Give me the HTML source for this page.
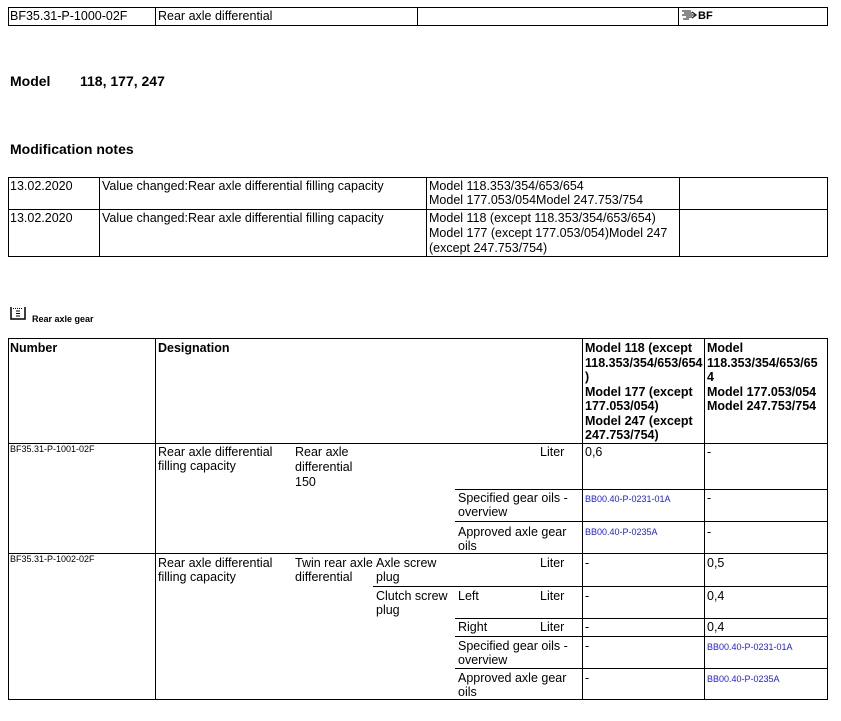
<!DOCTYPE html>
<html><head><meta charset="utf-8">
<style>
*{margin:0;padding:0;box-sizing:border-box}
body{width:841px;height:721px;background:#fff;position:relative;overflow:hidden;font-family:"Liberation Sans",Arial,sans-serif;font-size:12.5px;color:#000}
.l{position:absolute;background:#000}
.t{position:absolute;line-height:14px;white-space:nowrap}
.s{font-size:9px;line-height:11px}
.a{color:#1a1aff;font-size:9px;line-height:11px}
.b{font-weight:bold}
</style></head><body>
<!-- top table -->
<div class="l" style="left:8px;top:7px;width:820px;height:1px"></div>
<div class="l" style="left:8px;top:25px;width:820px;height:1px"></div>
<div class="l" style="left:8px;top:7px;width:1px;height:19px"></div>
<div class="l" style="left:155px;top:7px;width:1px;height:19px"></div>
<div class="l" style="left:417px;top:7px;width:1px;height:19px"></div>
<div class="l" style="left:678px;top:7px;width:1px;height:19px"></div>
<div class="l" style="left:827px;top:7px;width:1px;height:19px"></div>
<div class="t" style="left:10px;top:9px">BF35.31-P-1000-02F</div>
<div class="t" style="left:158px;top:9px">Rear axle differential</div>
<svg style="position:absolute;left:681px;top:10px" width="16" height="10" viewBox="0 0 16 10"><path d="M1 1h9M3 3h8M1 5h13M5 7h6M2 9h6" stroke="#444" stroke-width="1.3"/><path d="M11 2l4 3-4 3" stroke="#222" fill="none" stroke-width="1.3"/></svg>
<div class="t b" style="left:698px;top:9px;font-size:11px">BF</div>

<div class="t b" style="left:10px;top:74px;font-size:14px">Model</div>
<div class="t b" style="left:80px;top:74px;font-size:14px">118, 177, 247</div>
<div class="t b" style="left:10px;top:142px;font-size:14px">Modification notes</div>

<!-- mod table -->
<div class="l" style="left:8px;top:177px;width:820px;height:1px"></div>
<div class="l" style="left:8px;top:209px;width:820px;height:1px"></div>
<div class="l" style="left:8px;top:256px;width:820px;height:1px"></div>
<div class="l" style="left:8px;top:177px;width:1px;height:80px"></div>
<div class="l" style="left:99px;top:177px;width:1px;height:80px"></div>
<div class="l" style="left:426px;top:177px;width:1px;height:80px"></div>
<div class="l" style="left:679px;top:177px;width:1px;height:80px"></div>
<div class="l" style="left:827px;top:177px;width:1px;height:80px"></div>
<div class="t" style="left:10px;top:179px">13.02.2020</div>
<div class="t" style="left:102px;top:179px">Value changed:Rear axle differential filling capacity</div>
<div class="t" style="left:429px;top:179px">Model 118.353/354/653/654<br>Model 177.053/054Model 247.753/754</div>
<div class="t" style="left:10px;top:211px">13.02.2020</div>
<div class="t" style="left:102px;top:211px">Value changed:Rear axle differential filling capacity</div>
<div class="t" style="left:429px;top:211px;line-height:15px">Model 118 (except 118.353/354/653/654)<br>Model 177 (except 177.053/054)Model 247<br>(except 247.753/754)</div>

<!-- icon -->
<svg style="position:absolute;left:10px;top:306px" width="16" height="14" viewBox="0 0 16 14"><path d="M1 1v12h14V1" stroke="#000" stroke-width="1.5" fill="none"/><path d="M3 2.5h10" stroke="#000" stroke-dasharray="1 1"/><path d="M6 5h4M6 7.5h4M6 10h4" stroke="#000"/></svg>
<div class="t b" style="left:32px;top:312px;font-size:9px">Rear axle gear</div>

<!-- main table -->
<div class="l" style="left:8px;top:338px;width:820px;height:1px"></div>
<div class="l" style="left:8px;top:443px;width:820px;height:1px"></div>
<div class="l" style="left:8px;top:553px;width:820px;height:1px"></div>
<div class="l" style="left:8px;top:699px;width:820px;height:1px"></div>
<div class="l" style="left:455px;top:489px;width:373px;height:1px"></div>
<div class="l" style="left:455px;top:521px;width:373px;height:1px"></div>
<div class="l" style="left:373px;top:586px;width:455px;height:1px"></div>
<div class="l" style="left:455px;top:618px;width:373px;height:1px"></div>
<div class="l" style="left:455px;top:636px;width:373px;height:1px"></div>
<div class="l" style="left:455px;top:668px;width:373px;height:1px"></div>
<div class="l" style="left:8px;top:338px;width:1px;height:362px"></div>
<div class="l" style="left:155px;top:338px;width:1px;height:362px"></div>
<div class="l" style="left:582px;top:338px;width:1px;height:362px"></div>
<div class="l" style="left:704px;top:338px;width:1px;height:362px"></div>
<div class="l" style="left:827px;top:338px;width:1px;height:362px"></div>

<div class="t b" style="left:10px;top:341px">Number</div>
<div class="t b" style="left:158px;top:341px">Designation</div>
<div class="t b" style="left:585px;top:341px;line-height:14.5px">Model 118 (except<br>118.353/354/653/654<br>)<br>Model 177 (except<br>177.053/054)<br>Model 247 (except<br>247.753/754)</div>
<div class="t b" style="left:707px;top:341px;line-height:14.5px">Model<br>118.353/354/653/65<br>4<br>Model 177.053/054<br>Model 247.753/754</div>

<div class="t s" style="left:10px;top:444px">BF35.31-P-1001-02F</div>
<div class="t" style="left:158px;top:445px">Rear axle differential<br>filling capacity</div>
<div class="t" style="left:295px;top:445px;line-height:15px">Rear axle<br>differential<br>150</div>
<div class="t" style="left:540px;top:445px">Liter</div>
<div class="t" style="left:585px;top:445px">0,6</div>
<div class="t" style="left:707px;top:445px">-</div>
<div class="t" style="left:458px;top:491px">Specified gear oils -<br>overview</div>
<div class="t a" style="left:585px;top:494px">BB00.40-P-0231-01A</div>
<div class="t" style="left:707px;top:491px">-</div>
<div class="t" style="left:458px;top:525px">Approved axle gear<br>oils</div>
<div class="t a" style="left:585px;top:527px">BB00.40-P-0235A</div>
<div class="t" style="left:707px;top:525px">-</div>

<div class="t s" style="left:10px;top:554px">BF35.31-P-1002-02F</div>
<div class="t" style="left:158px;top:556px">Rear axle differential<br>filling capacity</div>
<div class="t" style="left:295px;top:556px">Twin rear axle<br>differential</div>
<div class="t" style="left:376px;top:556px">Axle screw<br>plug</div>
<div class="t" style="left:540px;top:556px">Liter</div>
<div class="t" style="left:585px;top:556px">-</div>
<div class="t" style="left:707px;top:556px">0,5</div>
<div class="t" style="left:376px;top:589px">Clutch screw<br>plug</div>
<div class="t" style="left:458px;top:589px">Left</div>
<div class="t" style="left:540px;top:589px">Liter</div>
<div class="t" style="left:585px;top:589px">-</div>
<div class="t" style="left:707px;top:589px">0,4</div>
<div class="t" style="left:458px;top:620px">Right</div>
<div class="t" style="left:540px;top:620px">Liter</div>
<div class="t" style="left:585px;top:620px">-</div>
<div class="t" style="left:707px;top:620px">0,4</div>
<div class="t" style="left:458px;top:639px">Specified gear oils -<br>overview</div>
<div class="t" style="left:585px;top:639px">-</div>
<div class="t a" style="left:707px;top:642px">BB00.40-P-0231-01A</div>
<div class="t" style="left:458px;top:671px">Approved axle gear<br>oils</div>
<div class="t" style="left:585px;top:671px">-</div>
<div class="t a" style="left:707px;top:674px">BB00.40-P-0235A</div>
</body></html>
